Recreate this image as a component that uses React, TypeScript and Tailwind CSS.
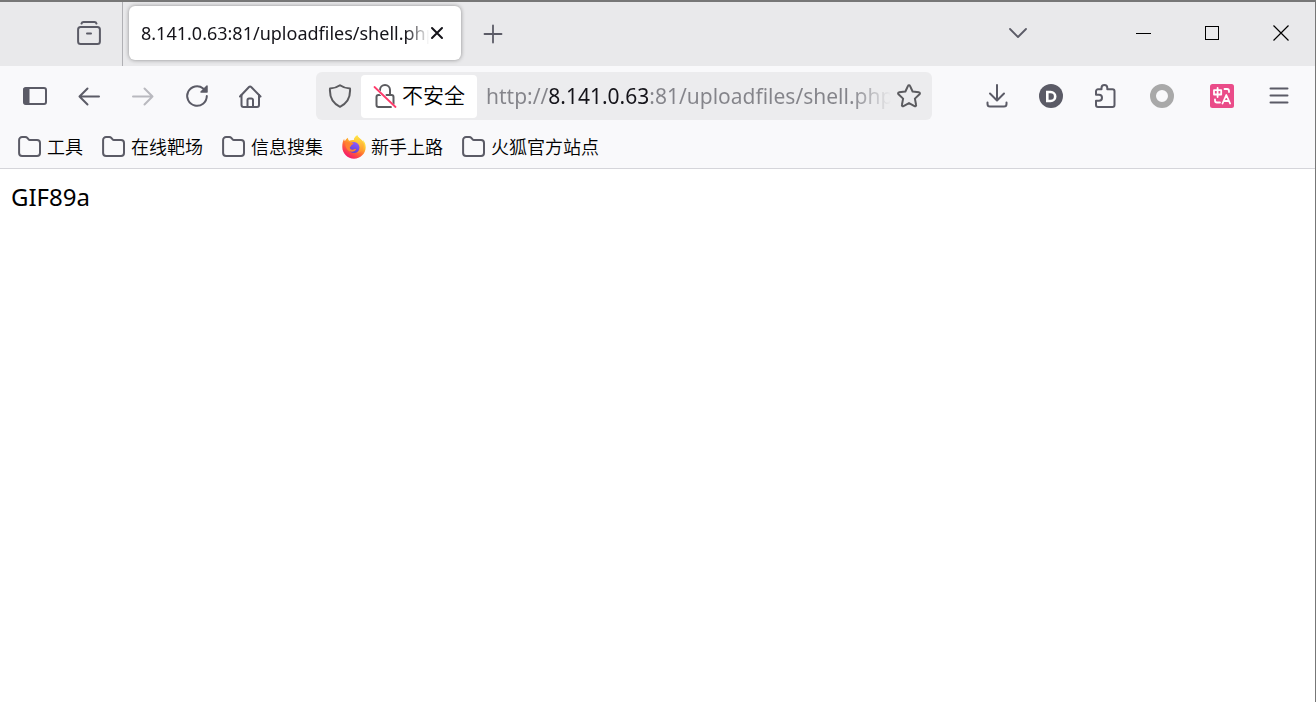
import type { ReactNode } from "react";

const URL_TEXT = "http://8.141.0.63:81/uploadfiles/shell.php";

const bookmarks = [
  { name: "工具", icon: "folder" },
  { name: "在线靶场", icon: "folder" },
  { name: "信息搜集", icon: "folder" },
  { name: "新手上路", icon: "firefox" },
  { name: "火狐官方站点", icon: "folder" },
];

function Icon({ children }: { children: ReactNode }) {
  return (
    <svg
      className="size-6 shrink-0"
      viewBox="0 0 24 24"
      fill="none"
      stroke="currentColor"
      strokeWidth="2"
      strokeLinecap="round"
      strokeLinejoin="round"
      aria-hidden="true"
    >
      {children}
    </svg>
  );
}

function ToolButton({
  label,
  className = "w-[54px]",
  disabled = false,
  children,
}: {
  label: string;
  className?: string;
  disabled?: boolean;
  children: ReactNode;
}) {
  return (
    <button
      type="button"
      aria-label={label}
      disabled={disabled}
      className={`flex h-12 shrink-0 items-center justify-center text-[#5b5b66] disabled:opacity-40 ${className}`}
    >
      <Icon>{children}</Icon>
    </button>
  );
}

function FolderIcon() {
  return (
    <Icon>
      <path d="M1.1 5a3 3 0 0 1 3-3h3.2c.8 0 1.5.3 2 .9l1.3 1.5c.3.4.8.6 1.3.6h7.1a3 3 0 0 1 3 3v10a3 3 0 0 1-3 3H4.100a3 3 0 0 1-3-3z" />
    </Icon>
  );
}

function FirefoxIcon() {
  return (
    <svg className="size-6 shrink-0" viewBox="0 0 24 24" aria-hidden="true">
      <defs>
        <linearGradient id="flame" x1="0.8" y1="0.1" x2="0.25" y2="0.95">
          <stop offset="0" stopColor="#fff44f" />
          <stop offset="0.3" stopColor="#ffbd2b" />
          <stop offset="0.6" stopColor="#ff6a34" />
          <stop offset="1" stopColor="#f5156c" />
        </linearGradient>
        <linearGradient id="globe" x1="0.7" y1="0" x2="0.3" y2="1">
          <stop offset="0" stopColor="#9059ff" />
          <stop offset="1" stopColor="#5b3fd0" />
        </linearGradient>
        <linearGradient id="tail" x1="0.5" y1="0" x2="0.5" y2="1">
          <stop offset="0" stopColor="#ffe847" />
          <stop offset="1" stopColor="#ff8a2b" />
        </linearGradient>
      </defs>
      <path
        fill="url(#flame)"
        d="M15.2.2c-2.400 1.500-3.200 3.700-3.300 4.900-1.700-.2-3.400.1-4.700.7C6.200 5 5.900 3.900 6 2.800 4.500 3.700 3.500 5 2.900 6.100 2.300 5.500 2.200 4.600 2.200 3.800 1 5.300.2 8.600.3 12c0 6.600 5.300 11.700 11.700 11.700S23.700 18.700 23.700 12.300c0-3.700-1.400-6.300-3.100-7.600.5 1.100.7 2 .8 2.900C19.700 3.900 16.400 3.400 15.200.2z"
      />
      <circle cx="12" cy="12.6" r="5.5" fill="url(#globe)" />
      <path
        fill="url(#tail)"
        d="M15.2.2c-2.400 1.500-3.200 3.700-3.300 4.900 3.300.2 5.900 2.600 6.200 6.200.3 3-1.100 5.600-3.300 7 4-.8 7-3.900 7.100-8C21.900 4.600 16.600 3.500 15.200.2z"
      />
      <path
        fill="#ff8130"
        d="M3.200 8.300C4.900 6.900 7 7 8.300 7.700c1.300.1 2.600.1 3.400.6-.1.9-1.600 1.300-2.300 1.900-.6.6-.4 1.600-1.600 1.900-.2 1.800 1.400 2.900 3 2.600 1.300-.2 2.200-1.100 3.400-.7-.5 1.500-2.200 2.800-4.300 2.800-3.500 0-6.500-3-6.700-8.500z"
      />
    </svg>
  );
}

function TabBar() {
  return (
    <div className="flex h-16 items-center bg-[#e9e9eb]">
      <div className="flex h-full w-[123px] shrink-0 items-center justify-end border-r border-[#b0b0b4] pr-[6px] pb-[2px]">
        <ToolButton label="Firefox View">
          <path d="M4.5 2.600c.3-1 1-1.500 2-1.500h11c1 0 1.700.5 2 1.500" />
          <rect x="1.1" y="6.1" width="21.8" height="16.800" rx="2.5" />
          <path d="M10 12.500h4" />
        </ToolButton>
      </div>

      <div className="mb-[2px] ml-[6px] flex h-[54px] w-[332px] shrink-0 items-center rounded-md bg-white pr-4 pl-3 shadow-[0_0_4px_rgba(0,0,0,0.4)]">
        <div className="flex-1 overflow-hidden mask-r-from-92% text-lg whitespace-nowrap text-[#15141a]">
          8.141.0.63:81/uploadfiles/shell.php
        </div>
        <button type="button" aria-label="关闭标签页" className="text-[#15141a]">
          <svg className="size-4" viewBox="0 0 16 16" stroke="currentColor" strokeWidth="2" strokeLinecap="round" aria-hidden="true">
            <path d="M3 3l10 10M13 3L3 13" />
          </svg>
        </button>
      </div>

      <ToolButton label="新建标签页" className="ml-1 w-14">
        <path d="M12 3.500v17M3.500 12h17" strokeWidth="1.8" />
      </ToolButton>

      <div className="ml-auto flex h-full items-center pb-[2px]">
        <ToolButton label="列出所有标签页" className="mr-16 w-[54px]">
          <path d="M4 8l8 8 8-8" strokeWidth="1.8" />
        </ToolButton>
        <button type="button" aria-label="最小化" className="flex h-full w-[68px] items-center justify-center">
          <span className="h-px w-[15px] bg-black" />
        </button>
        <button type="button" aria-label="最大化" className="flex h-full w-[69px] items-center justify-center">
          <span className="size-[14px] border border-black" />
        </button>
        <button type="button" aria-label="关闭" className="flex h-full w-[69px] items-center justify-center">
          <svg className="size-4" viewBox="0 0 16 16" stroke="#000" strokeWidth="1.2" aria-hidden="true">
            <path d="M.5.5l15 15M15.5.5l-15 15" />
          </svg>
        </button>
      </div>
    </div>
  );
}

function AddressBar() {
  return (
    <div className="mx-[38px] flex h-12 min-w-0 flex-1 items-center rounded-md bg-[#ececee] pr-[11px]">
      <button type="button" aria-label="跟踪保护" className="flex w-[45px] shrink-0 justify-center pl-[3px] text-[#5b5b5f]">
        <Icon>
          <path d="M12 1.200c2.800 2 6.300 3.100 10 3.300.5 6.900-1.800 14.400-10 18.300C3.800 18.900 1.500 11.400 2 4.500c3.700-.2 7.200-1.300 10-3.300z" />
        </Icon>
      </button>
      <button
        type="button"
        className="flex h-[43px] shrink-0 items-center gap-[5px] rounded-sm bg-white px-3 text-[21px] font-[350] text-black"
      >
        <Icon>
          <g stroke="#5b5b5f">
            <path d="M7 11V6a5 5 0 0 1 10 0v5h1.500a2 2 0 0 1 2 2v7M7 11H5.500a2 2 0 0 0-2 2v8a2 2 0 0 0 2 2H18" />
            <path d="M7 11h1" />
            <path d="M13.500 11H17" />
          </g>
          <path d="M2 3.500l20 20" stroke="#fff" strokeWidth="3" />
          <path d="M1.500 3l21 20" stroke="#ff3b6b" strokeWidth="1.8" />
        </Icon>
        不安全
      </button>
      <input
        type="text"
        aria-label="地址"
        defaultValue={URL_TEXT}
        spellCheck={false}
        className="ml-[9px] min-w-0 flex-1 bg-[linear-gradient(90deg,#84848a_62px,#15141a_62px,#15141a_164px,#84848a_164px,#84848a_365px,transparent_405px)] bg-clip-text pt-[2px] text-[21px] text-transparent caret-black outline-none"
      />
      <button type="button" aria-label="为此页添加书签" className="shrink-0 text-[#5b5b5f]">
        <Icon>
          <path d="M12 1.200c.4 0 .8.200 1 .7l2.600 5.600 6.300.8c1 .1 1.300 1.200.6 1.900l-4.600 4.400 1.200 6.400c.2.900-.8 1.600-1.600 1.200L12 19.100l-5.500 3.100c-.8.400-1.800-.3-1.600-1.200l1.200-6.400-4.600-4.400c-.7-.7-.4-1.800.6-1.900l6.300-.8L11 1.900c.2-.5.6-.7 1-.7z" />
        </Icon>
      </button>
    </div>
  );
}

function NavBar() {
  return (
    <div className="flex items-center pt-[6px] pr-[9px] pl-2">
      <ToolButton label="侧栏">
        <rect x="1" y="4" width="22" height="16" rx="2" />
        <path d="M1 5v14a1 1 0 0 0 1 1h4V4H2a1 1 0 0 0-1 1z" fill="currentColor" strokeWidth="1" />
      </ToolButton>
      <ToolButton label="后退">
        <path d="M22 12.500H2.500M10.500 4.500l-8 8 8 8" />
      </ToolButton>
      <ToolButton label="前进" disabled>
        <path d="M2 12.500h19.500M13.500 4.500l8 8-8 8" />
      </ToolButton>
      <ToolButton label="重新加载">
        <path d="M21.800 12a9.800 9.800 0 1 1-3.600-7.600" />
        <path d="M22 2v6h-6z" fill="currentColor" strokeWidth="1.5" />
      </ToolButton>
      <ToolButton label="主页">
        <path d="M1 12.500L10 3a1.500 1.500 0 0 1 2.200 0L21.500 12.500" />
        <path d="M2.500 11V21a2 2 0 0 0 2 2h13.500a2 2 0 0 0 2-2V11M8.500 22.500V16a1.500 1.500 0 0 1 1.500-1.500h2.500A1.500 1.500 0 0 1 14 16v6.500" />
      </ToolButton>

      <AddressBar />

      <ToolButton label="下载">
        <path d="M12 1v15M5 9.500l7 7 7-7M2.500 18.500V20a2.500 2.500 0 0 0 2.500 2.500h14a2.500 2.500 0 0 0 2.500-2.500v-1.500" />
      </ToolButton>
      <ToolButton label="账户">
        <circle cx="12" cy="12" r="12" fill="currentColor" stroke="none" />
        <path d="M8.300 8h3.400a4.200 4.200 0 0 1 0 9H8.300z" stroke="#fff" strokeWidth="2.6" strokeLinejoin="miter" />
      </ToolButton>
      <ToolButton label="扩展">
        <path d="M3 8.500V7.300a2 2 0 0 1 2-2h3.500V4a2.900 2.900 0 0 1 5.800 0v1.300h5.200a2 2 0 0 1 2 2V21a2 2 0 0 1-2 2H5a2 2 0 0 1-2-2v-4.300h3a2.900 2.900 0 0 0 0-6H3z" />
      </ToolButton>
      <ToolButton label="代理" className="w-[60px]">
        <circle cx="12" cy="12" r="9" stroke="#a9a9a9" strokeWidth="6" />
      </ToolButton>
      <ToolButton label="翻译" className="w-[60px]">
        <rect width="24" height="24" rx="2.5" fill="#ea4c89" stroke="none" />
        <g stroke="#fff" strokeWidth="1.8">
          <path d="M4 6.200h7.200v4.300H4zM7.600 4v9" />
          <path d="M14.500 5h2.500a2 2 0 0 1 2 2v1M5 15.500v1a2 2 0 0 0 2 2h3" />
          <path d="M12.500 19.500l3.800-8.500 3.800 8.500M13.800 17h5" />
        </g>
      </ToolButton>
      <ToolButton label="菜单">
        <path d="M3.500 4.500h17M3.500 11.500h17M3.500 18.500h17" />
      </ToolButton>
    </div>
  );
}

function App() {
  return (
    <div className="flex min-h-dvh flex-col border-t-2 border-r border-[#777] bg-white font-['Noto_Sans','Noto_Sans_CJK_SC',sans-serif]">
      <TabBar />
      <header className="border-b border-[#d5d5da] bg-[#f9f9fb]">
        <NavBar />
        <nav className="flex h-12 items-center gap-[19px] px-[18px] pt-[6px]">
          {bookmarks.map((bookmark) => (
            <a
              key={bookmark.name}
              href="#"
              className="flex items-center gap-[5px] text-lg font-[350] whitespace-nowrap text-black"
            >
              <span className="text-[#5b5b66]">{bookmark.icon === "folder" ? <FolderIcon /> : <FirefoxIcon />}</span>
              {bookmark.name}
            </a>
          ))}
        </nav>
      </header>
      <main className="px-[11px] py-3 text-2xl text-black">GIF89a</main>
    </div>
  );
}

export default App;
